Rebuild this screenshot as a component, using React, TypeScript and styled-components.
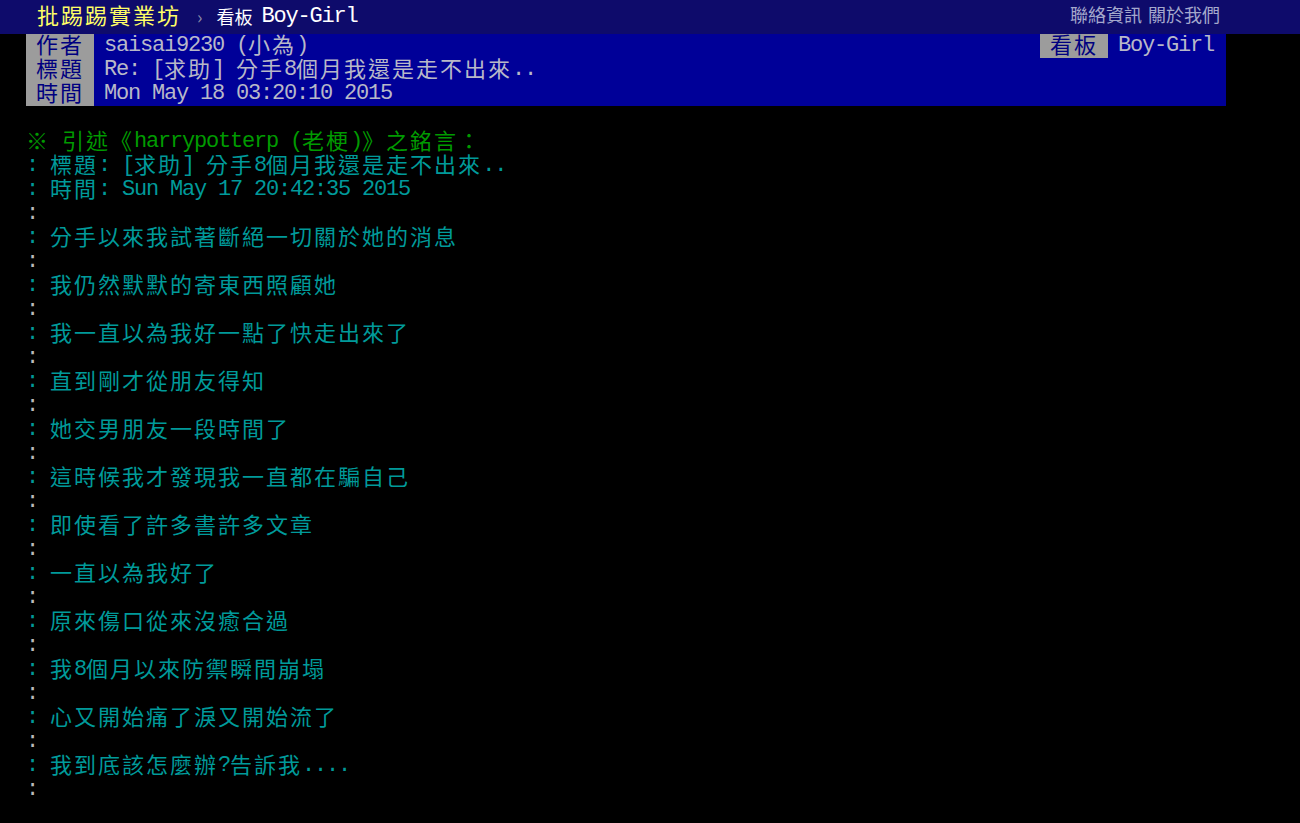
import React from 'react';
import styled, { createGlobalStyle } from 'styled-components';

const GlobalStyle = createGlobalStyle`
  html, body {
    margin: 0;
    padding: 0;
    background: #000;
  }
  body {
    color: #bbb;
    font-family: "Noto Sans CJK TC", "Noto Sans CJK SC", sans-serif;
    font-size: 24px;
  }
`;

// terminal cells: full-width glyphs take 24px, ascii takes 12px
const Full = styled.span`
  font-size: 22px;
  letter-spacing: 2px;
`;

const Half = styled.span`
  font-family: "Liberation Mono", monospace;
  font-size: 22px;
  letter-spacing: -1.2px;
  vertical-align: 2px;
`;

const splitRuns = (text: string) => {
  const runs: { latin: boolean; s: string }[] = [];
  for (const ch of text) {
    const latin = ch.charCodeAt(0) < 128;
    const last = runs[runs.length - 1];
    if (last && last.latin === latin) last.s += ch;
    else runs.push({ latin, s: ch });
  }
  return runs;
};

const Term: React.FC<{ text: string }> = ({ text }) => (
  <>
    {splitRuns(text).map((r, i) => (r.latin ? <Half key={i}>{r.s}</Half> : <Full key={i}>{r.s}</Full>))}
  </>
);

const TopBar = styled.div`
  background: #0e0b6b;
  height: 34px;
`;

const TopInner = styled.div`
  width: 1200px;
  margin-left: 26px;
  height: 34px;
  display: flex;
  align-items: flex-start;
  justify-content: space-between;
`;

const Crumbs = styled.div`
  display: flex;
  align-items: baseline;
  padding-left: 11px;
  white-space: pre;
  line-height: 28px;
`;

const Logo = styled.span`
  color: #ffff66;
`;

const Chevron = styled.span`
  color: #8c8ca8;
  font-size: 18px;
  margin: 0 14px 0 16px;
`;

const BoardLabel = styled.span`
  color: #fff;
  font-size: 18px;
  margin-right: 9px;
`;

const BoardName = styled.span`
  color: #fff;
`;

const Links = styled.div`
  display: flex;
  gap: 6px;
  padding-right: 6px;
  font-size: 18px;
  line-height: 28px;
  color: #a4a8cc;
`;

const Main = styled.div`
  width: 1200px;
  margin-left: 26px;
`;

const Meta = styled.div`
  background: #000098;
`;

const MetaLine = styled.div`
  display: flex;
  justify-content: space-between;
  height: 24px;
  line-height: 18px;
  white-space: pre;
`;

const MetaGroup = styled.div`
  display: flex;
`;

const MetaTag = styled.span`
  background: #9c9c9c;
  color: #000080;
  padding: 0 10px;
  height: 24px;
`;

const MetaValue = styled.span`
  color: #b8b8c8;
  padding: 0 12px 0 10px;
`;

const Article = styled.div`
  padding-top: 24px;
`;

const tones = {
  plain: '#bbbbbb',
  green: '#009a00',
  cyan: '#009a9a',
};

const Line = styled.div<{ $tone?: keyof typeof tones }>`
  height: 24px;
  line-height: 18px;
  white-space: pre;
  color: ${(p) => tones[p.$tone || 'plain']};
`;

const quoted = [
  '分手以來我試著斷絕一切關於她的消息',
  '我仍然默默的寄東西照顧她',
  '我一直以為我好一點了快走出來了',
  '直到剛才從朋友得知',
  '她交男朋友一段時間了',
  '這時候我才發現我一直都在騙自己',
  '即使看了許多書許多文章',
  '一直以為我好了',
  '原來傷口從來沒癒合過',
  '我8個月以來防禦瞬間崩塌',
  '心又開始痛了淚又開始流了',
  '我到底該怎麼辦?告訴我....',
];

export default function App() {
  return (
    <>
      <GlobalStyle />
      <TopBar>
        <TopInner>
          <Crumbs>
            <Logo>
              <Full>批踢踢實業坊</Full>
            </Logo>
            <Chevron>›</Chevron>
            <BoardLabel>看板</BoardLabel>
            <BoardName>
              <Half>Boy-Girl</Half>
            </BoardName>
          </Crumbs>
          <Links>
            <span>聯絡資訊</span>
            <span>關於我們</span>
          </Links>
        </TopInner>
      </TopBar>
      <Main>
        <Meta>
          <MetaLine>
            <MetaGroup>
              <MetaTag>
                <Full>作者</Full>
              </MetaTag>
              <MetaValue>
                <Term text="saisai9230 (小為)" />
              </MetaValue>
            </MetaGroup>
            <MetaGroup>
              <MetaTag>
                <Full>看板</Full>
              </MetaTag>
              <MetaValue>
                <Term text="Boy-Girl" />
              </MetaValue>
            </MetaGroup>
          </MetaLine>
          <MetaLine>
            <MetaGroup>
              <MetaTag>
                <Full>標題</Full>
              </MetaTag>
              <MetaValue>
                <Term text="Re: [求助] 分手8個月我還是走不出來.." />
              </MetaValue>
            </MetaGroup>
          </MetaLine>
          <MetaLine>
            <MetaGroup>
              <MetaTag>
                <Full>時間</Full>
              </MetaTag>
              <MetaValue>
                <Term text="Mon May 18 03:20:10 2015" />
              </MetaValue>
            </MetaGroup>
          </MetaLine>
        </Meta>
        <Article>
          <Line $tone="green">
            <Term text="※ 引述《harrypotterp (老梗)》之銘言：" />
          </Line>
          <Line $tone="cyan">
            <Term text=": 標題: [求助] 分手8個月我還是走不出來.." />
          </Line>
          <Line $tone="cyan">
            <Term text=": 時間: Sun May 17 20:42:35 2015" />
          </Line>
          <Line>
            <Term text=":" />
          </Line>
          {quoted.map((t) => (
            <React.Fragment key={t}>
              <Line $tone="cyan">
                <Term text={`: ${t}`} />
              </Line>
              <Line>
                <Term text=":" />
              </Line>
            </React.Fragment>
          ))}
        </Article>
      </Main>
    </>
  );
}
